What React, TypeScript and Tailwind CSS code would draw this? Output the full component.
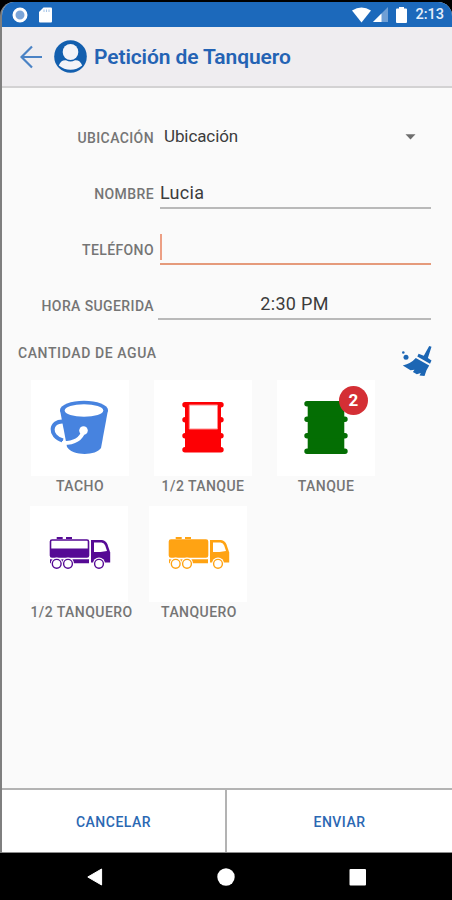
import type { ReactNode } from "react";

export default function App() {
  return (
    <div className="flex h-[900px] w-[452px] flex-col bg-black pt-[2px] font-['Roboto','Liberation_Sans',sans-serif] text-[#757575]">
      <div className="flex min-h-0 flex-1 flex-col overflow-hidden rounded-t-[14px] border-l-2 border-[#7f7f7f] bg-[#fafafa]">
        <StatusBar />

        {/* App bar */}
        <header className="flex h-[61px] shrink-0 items-center border-b-2 border-[#d3d2d3] bg-[#efedf0] pl-[18px]">
          <BackIcon />
          <UserIcon />
          <h1 className="ml-[7px] pt-px text-[21px] leading-6 font-semibold tracking-[-0.1px] text-[#2463b4]">
            Petición de Tanquero
          </h1>
        </header>

        {/* Form */}
        <main className="flex-1 pt-[21px]">
          <Row label="UBICACIÓN">
            <div className="flex h-[56px] items-center justify-between pr-[15px] pl-[4px] text-[17px] tracking-[-0.1px] text-[#3c3c3c]">
              <span>Ubicación</span>
              <svg width="11" height="6" viewBox="0 0 11 6" aria-hidden="true">
                <path d="M0.5 0.3h10L5.5 5.5z" fill="#6e6e6e" />
              </svg>
            </div>
          </Row>
          <Row label="NOMBRE">
            <div className="h-[44px] border-b-2 border-[#b9b9b9] pt-[15px] text-[18px] leading-[26px] tracking-[0.3px] text-[#3c3c3c]">
              Lucia
            </div>
          </Row>
          <Row label="TELÉFONO">
            <div className="flex h-[44px] items-end border-b-2 border-[#e59a7b] pb-[3px]">
              <span className="h-[26px] w-[2px] bg-[#ec9f84]" />
            </div>
          </Row>
          <Row label="HORA SUGERIDA">
            <div className="-ml-[2px] h-[43px] border-b-2 border-[#b9b9b9] pt-[14px] text-center text-[18px] leading-[26px] tracking-[0.3px] text-[#3c3c3c]">
              2:30 PM
            </div>
          </Row>

          <div className="flex h-[47px] justify-between pr-[20px] pl-[16px]">
            <h2 className="pt-[10px] text-[14px] leading-[20px] font-medium tracking-[0.6px]">CANTIDAD DE AGUA</h2>
            <BroomIcon />
          </div>

          <div className="flex gap-[25px] pl-[29px]">
            <Tile label="TACHO">
              <BucketIcon />
            </Tile>
            <Tile label="1/2 TANQUE">
              <BarrelIcon half />
            </Tile>
            <Tile label="TANQUE" count={2}>
              <BarrelIcon />
            </Tile>
          </div>
          <div className="mt-[10px] flex gap-[21px] pl-[28px]">
            <Tile label="1/2 TANQUERO" labelClass="pl-[5px]">
              <TruckIcon half />
            </Tile>
            <Tile label="TANQUERO" labelClass="pl-[2px]">
              <TruckIcon />
            </Tile>
          </div>
        </main>

        <footer className="flex h-[65px] shrink-0 border-t-2 border-b border-t-[#b3b3b3] border-b-[#8d8d8d] bg-white text-[14px] font-medium tracking-[0.5px] text-[#2b68b3]">
          <button className="w-[225px] border-r-2 border-[#b3b3b3] pt-[2px]">CANCELAR</button>
          <button className="flex-1 pt-[2px]">ENVIAR</button>
        </footer>
      </div>

      {/* System navigation */}
      <nav className="flex h-[47px] shrink-0 justify-center gap-[114px] pt-[15px]">
        <svg width="18" height="18" viewBox="0 0 18 18" className="mr-[-1px]">
          <path d="M1.8 9L15.6 1v16z" fill="#fff" stroke="#fff" strokeLinejoin="round" />
        </svg>
        <svg width="18" height="18" viewBox="0 0 18 18">
          <circle cx="9" cy="9" r="8.7" fill="#fff" />
        </svg>
        <svg width="18" height="18" viewBox="0 0 18 18">
          <rect x="0.5" y="1" width="16.5" height="16.5" rx="1" fill="#fff" />
        </svg>
      </nav>
    </div>
  );
}

function Row({ label, children }: { label: string; children: ReactNode }) {
  return (
    <div className="flex h-[56px] pr-[21px]">
      <div className="w-[152px] pt-[19px] text-right text-[14px] leading-[20px] font-medium tracking-[0.4px]">{label}</div>
      <div className="ml-[6px] flex-1">{children}</div>
    </div>
  );
}

function Tile({
  label,
  labelClass = "",
  count,
  children,
}: {
  label: string;
  labelClass?: string;
  count?: number;
  children: ReactNode;
}) {
  return (
    <div className="relative flex flex-col">
      <div className="h-[96px] w-[98px] bg-white">{children}</div>
      <div
        className={`flex h-[20px] w-[98px] justify-center text-[14px] leading-[20px] font-medium tracking-[0.45px] whitespace-nowrap ${labelClass}`}
      >
        {label}
      </div>
      {count !== undefined && (
        <span className="absolute top-[6px] left-[62px] flex h-[29px] w-[29px] items-center justify-center rounded-full bg-[#d42f35] text-[17px] font-bold text-white">
          {count}
        </span>
      )}
    </div>
  );
}

function StatusBar() {
  return (
    <div className="flex h-[25px] shrink-0 items-center bg-[#1c69bb] pr-[8px] pl-[10px]">
      <svg width="16" height="16" viewBox="0 0 16 16" aria-hidden="true">
        <circle cx="8" cy="8" r="6" fill="#7ba5d8" stroke="#fff" strokeWidth="3" />
      </svg>
      <svg width="13" height="16" viewBox="0 0 13 16" className="ml-[11px]" aria-hidden="true">
        <path d="M4.5 0.5H12a1 1 0 011 1v13a1 1 0 01-1 1H1a1 1 0 01-1-1V5z" fill="#fff" />
        <path d="M5 2.5v2.5M7.5 2.5v2.5M10 2.5v2.5" stroke="#a9c6e8" strokeWidth="1.1" />
      </svg>
      <svg width="19" height="16" viewBox="0 0 19 16" className="ml-auto" aria-hidden="true">
        <path d="M0 3.5Q9.5-2.5 19 3.5L9.5 15.5z" fill="#fff" />
      </svg>
      <svg width="15" height="15" viewBox="0 0 15 15" className="ml-[2px]" aria-hidden="true">
        <path d="M0 15L15 0v15z" fill="#6f9fd5" />
        <path d="M0 15L8.500 6.500V15z" fill="#fff" />
      </svg>
      <svg width="11" height="16" viewBox="0 0 11 16" className="ml-[8px]" aria-hidden="true">
        <path d="M3 0h5v1.500h2a1 1 0 011 1V15a1 1 0 01-1 1H1a1 1 0 01-1-1V2.500a1 1 0 011-1h2z" fill="#fff" />
      </svg>
      <span className="ml-[8px] pt-px text-[14.5px] font-medium text-[#e4eefa]">2:13</span>
    </div>
  );
}

function BackIcon() {
  return (
    <svg width="23" height="24" viewBox="0 0 23 24" fill="none" aria-hidden="true">
      <path d="M12 1.500L1.500 12 12 22.500M1.500 12H22" stroke="#4b83c5" strokeWidth="2.200" />
    </svg>
  );
}

function UserIcon() {
  return (
    <svg width="33" height="33" viewBox="0 0 33 33" className="ml-[11px]" aria-hidden="true">
      <circle cx="16.500" cy="16.500" r="16.300" fill="#135fae" />
      <ellipse cx="16.500" cy="12" rx="7.800" ry="8" fill="#f4f4f8" />
      <path d="M4.800 25.500Q7 19.800 12 20.300Q16.500 22.800 21 20.300Q26 19.800 28.200 25.500Q23 29.700 16.500 29.700T4.800 25.500z" fill="#f4f4f8" />
    </svg>
  );
}

function BroomIcon() {
  return (
    <svg width="31" height="32" viewBox="0 0 31 32" className="mt-[12px]" aria-hidden="true">
      <g fill="#1c66b4">
        <path d="M28.200 1l2.300.8-3.600 11.200 3.600 2.600-1.500 3.200L16.300 11.600l1.300-2.800 5.200 2z" />
        <path d="M14.800 13l13.400 7.400-2.700 4.800-2 5.800-5-.6 1.300-2.400-4 1.200-3.900-2.200 1.600-2.300-4 .6L1.800 20.500Q10 18.500 14.800 13z" />
        <circle cx="5" cy="12.300" r="2.500" />
        <circle cx="2.300" cy="7.500" r="1.300" />
      </g>
    </svg>
  );
}

function BucketIcon() {
  return (
    <svg width="98" height="96" viewBox="0 0 98 96" fill="none" aria-hidden="true">
      <path d="M33 41.500C18.500 40 17.500 57 32 60.500" stroke="#4783df" strokeWidth="4" />
      <path d="M29 30L36 67C41 76 65 76 70 68L77 30z" fill="#4783df" />
      <ellipse cx="53" cy="30" rx="24" ry="9.300" fill="#4783df" />
      <ellipse cx="53" cy="30.500" rx="19.300" ry="6.200" fill="#fff" />
      <path d="M31 63Q49 63.500 52.500 51" stroke="#fff" strokeWidth="4" />
      <circle cx="52.500" cy="50.500" r="4.300" fill="#fff" />
    </svg>
  );
}

function BarrelIcon({ half = false }: { half?: boolean }) {
  if (half) {
    return (
      <svg width="98" height="96" viewBox="0 0 98 96" aria-hidden="true">
        <path d="M31 22h36v50H31z" fill="#fd0004" />
        <path d="M31 24.700h36M31 39.700h3M64 39.700h3M31 55.700h36M31 69.700h36" stroke="#fd0004" strokeWidth="5.400" strokeLinecap="round" />
        <path d="M35.300 49V25H63.500V49z" fill="#fff" stroke="#ff8c8c" />
      </svg>
    );
  }
  return (
    <svg width="98" height="96" viewBox="0 0 98 96" aria-hidden="true">
      <path d="M30.700 21h36.600v53H30.700z" fill="#046e03" />
      <path d="M30 23.700h38M30 39.300h38M30 55.700h38M30 71.300h38" stroke="#046e03" strokeWidth="5.400" strokeLinecap="round" />
    </svg>
  );
}

function TruckIcon({ half = false }: { half?: boolean }) {
  return (
    <svg width="98" height="96" viewBox="0 0 98 96" className={half ? "text-[#560a95]" : "text-[#ffa313]"} fill="currentColor" aria-hidden="true">
      <path d="M26.700 31h6v2h-6zM36 31h6v2h-6z" />
      <rect x="20.500" y="34" width="38" height="17" rx="1.500" fill={half ? "#fff" : "currentColor"} stroke="currentColor" strokeWidth="1.600" />
      {half && <path d="M21 42.500H58v8.500H21z" />}
      <path d="M20 53.300h39v4H20z" />
      <path d="M61 34h11q4 .5 5.500 4.500l2.700 8V56.500H61z" />
      <path d="M64 36.500h7.500q2.800.3 3.800 3.200l1.700 5.300-6.500 1H64z" fill="#fff" />
      {[26.7, 38, 69].map((cx) => (
        <g key={cx}>
          <circle cx={cx} cy="57.500" r="6" fill="#fff" />
          <circle cx={cx} cy="57.800" r="4.400" fill="#fff" stroke="currentColor" strokeWidth="1.400" />
        </g>
      ))}
    </svg>
  );
}
